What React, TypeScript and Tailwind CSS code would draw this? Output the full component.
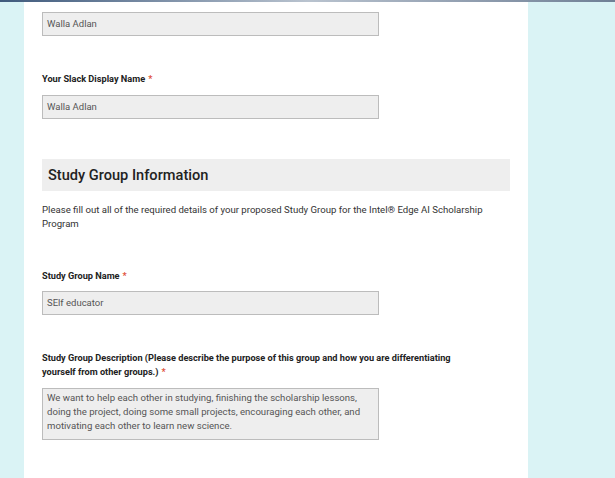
import React from "react";

const Req = () => <span className="ml-[3px] text-[#e0533c]">*</span>;

const Field = ({ value }: { value: string }) => (
  <div className="flex h-[24px] w-[337px] items-center border border-[#bcbcbc] bg-[#eeeeee] px-[4px] text-[9.5px] text-[#555]">
    {value}
  </div>
);

export default function App() {
  return (
    <div
      className="flex h-[478px] w-[615px] flex-col overflow-hidden bg-[#daf3f5] text-[9px] leading-[14px] text-[#333]"
      style={{ fontFamily: "Roboto, 'Liberation Sans', sans-serif" }}
    >
      <div className="h-[2px] w-full shrink-0 bg-gradient-to-r from-[#3f5a7c] via-[#b9c3cf] to-[#6f7f95]" />
      <div className="ml-[24px] flex w-[504px] flex-1 flex-col bg-white px-[18px] pt-[10px]">
        <Field value="Walla Adlan" />

        <div className="mt-[36px] text-[9.2px] font-bold text-[#222]">
          Your Slack Display Name
          <Req />
        </div>
        <div className="mt-[9px]">
          <Field value="Walla Adlan" />
        </div>

        <div className="mt-[40px] flex h-[32px] items-center bg-[#eeeeee] px-[6px]">
          <h2 className="text-[14.6px] font-medium text-[#222]">Study Group Information</h2>
        </div>

        <p className="mt-[12px] w-[452px] text-[9.6px]">
          Please fill out all of the required details of your proposed Study Group for the Intel® Edge AI Scholarship Program
        </p>

        <div className="mt-[38px] text-[9.2px] font-bold text-[#222]">
          Study Group Name
          <Req />
        </div>
        <div className="mt-[8px]">
          <Field value="SElf educator" />
        </div>

        <div className="mt-[36px] w-[442px] text-[9.2px] font-bold text-[#222]">
          Study Group Description (Please describe the purpose of this group and how you are differentiating yourself from other groups.)
          <Req />
        </div>
        <div className="mt-[9px] h-[52px] w-[337px] border border-[#bcbcbc] bg-[#eeeeee] px-[4px] pt-[2px] text-[9.6px] text-[#555]">
          We want to help each other in studying, finishing the scholarship lessons, doing the project, doing some small projects, encouraging each other, and motivating each other to learn new science.
        </div>
      </div>
    </div>
  );
}
